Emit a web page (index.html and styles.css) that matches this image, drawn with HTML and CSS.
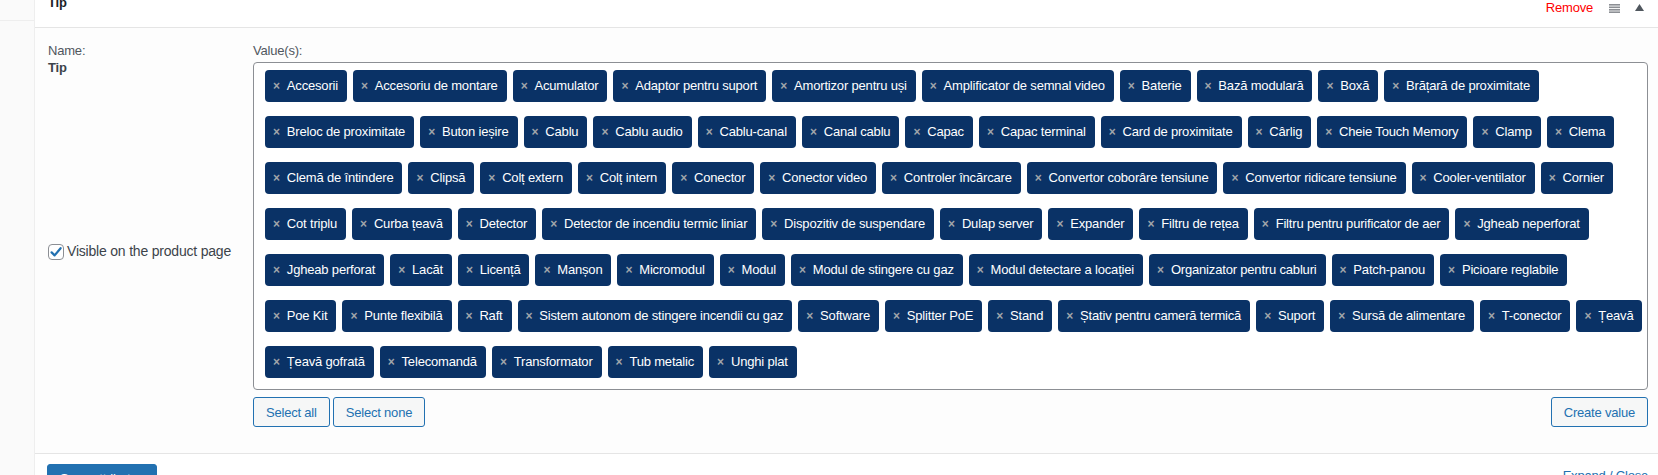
FILE: index.html
```html
<!DOCTYPE html>
<html lang="ro">
<head>
    <meta charset="UTF-8">
    <meta name="viewport" content="width=device-width, initial-scale=1.0">
    <title>Atribute produs</title>
    <link rel="stylesheet" href="styles.css">
</head>
<body>
    <div class="product-data">
        <ul class="tabs">
            <li></li>
        </ul>

        <div class="panel">
            <div class="attribute-head">
                <strong class="attribute-name">Tip</strong>
                <div class="head-actions">
                    <a href="#" class="remove-row">Remove</a>
                    <span class="handle" title="Drag">
                        <svg width="11" height="9" viewBox="0 0 11 9">
                            <rect x="0" y="0" width="11" height="1.6" fill="#8c8f94"/>
                            <rect x="0" y="2.5" width="11" height="1.6" fill="#8c8f94"/>
                            <rect x="0" y="5" width="11" height="1.6" fill="#8c8f94"/>
                            <rect x="0" y="7.4" width="11" height="1.6" fill="#8c8f94"/>
                        </svg>
                    </span>
                    <span class="toggle" title="Toggle">
                        <svg width="9" height="7" viewBox="0 0 9 7">
                            <polygon points="4.5,0 9,7 0,7" fill="#50575e"/>
                        </svg>
                    </span>
                </div>
            </div>

            <div class="attribute-body">
                <div class="attribute-left">
                    <div class="attribute-label">
                        <span class="label">Name:</span>
                        <strong>Tip</strong>
                    </div>
                    <div class="visible-row">
                        <label class="checkbox-label">
                            <span class="checkbox">
                                <svg width="14" height="14" viewBox="0 0 14 14">
                                    <path d="M2.6 7.4 L5.6 10.4 L11.6 3.2" fill="none" stroke="#2271b1" stroke-width="2.2" stroke-linecap="round" stroke-linejoin="round"/>
                                </svg>
                            </span>
                            Visible on the product page
                        </label>
                    </div>
                </div>

                <div class="attribute-values">
                    <span class="label">Value(s):</span>
                    <div class="select-box">
                        <div class="tag-row">
                            <span class="tag"><i>×</i>Accesorii</span>
                            <span class="tag"><i>×</i>Accesoriu de montare</span>
                            <span class="tag"><i>×</i>Acumulator</span>
                            <span class="tag"><i>×</i>Adaptor pentru suport</span>
                            <span class="tag"><i>×</i>Amortizor pentru uși</span>
                            <span class="tag"><i>×</i>Amplificator de semnal video</span>
                            <span class="tag"><i>×</i>Baterie</span>
                            <span class="tag"><i>×</i>Bază modulară</span>
                            <span class="tag"><i>×</i>Boxă</span>
                            <span class="tag"><i>×</i>Brățară de proximitate</span>
                        </div>
                        <div class="tag-row">
                            <span class="tag"><i>×</i>Breloc de proximitate</span>
                            <span class="tag"><i>×</i>Buton ieșire</span>
                            <span class="tag"><i>×</i>Cablu</span>
                            <span class="tag"><i>×</i>Cablu audio</span>
                            <span class="tag"><i>×</i>Cablu-canal</span>
                            <span class="tag"><i>×</i>Canal cablu</span>
                            <span class="tag"><i>×</i>Capac</span>
                            <span class="tag"><i>×</i>Capac terminal</span>
                            <span class="tag"><i>×</i>Card de proximitate</span>
                            <span class="tag"><i>×</i>Cârlig</span>
                            <span class="tag"><i>×</i>Cheie Touch Memory</span>
                            <span class="tag"><i>×</i>Clamp</span>
                            <span class="tag"><i>×</i>Clema</span>
                        </div>
                        <div class="tag-row">
                            <span class="tag"><i>×</i>Clemă de întindere</span>
                            <span class="tag"><i>×</i>Clipsă</span>
                            <span class="tag"><i>×</i>Colț extern</span>
                            <span class="tag"><i>×</i>Colț intern</span>
                            <span class="tag"><i>×</i>Conector</span>
                            <span class="tag"><i>×</i>Conector video</span>
                            <span class="tag"><i>×</i>Controler încărcare</span>
                            <span class="tag"><i>×</i>Convertor coborâre tensiune</span>
                            <span class="tag"><i>×</i>Convertor ridicare tensiune</span>
                            <span class="tag"><i>×</i>Cooler-ventilator</span>
                            <span class="tag"><i>×</i>Cornier</span>
                        </div>
                        <div class="tag-row">
                            <span class="tag"><i>×</i>Cot triplu</span>
                            <span class="tag"><i>×</i>Curba țeavă</span>
                            <span class="tag"><i>×</i>Detector</span>
                            <span class="tag"><i>×</i>Detector de incendiu termic liniar</span>
                            <span class="tag"><i>×</i>Dispozitiv de suspendare</span>
                            <span class="tag"><i>×</i>Dulap server</span>
                            <span class="tag"><i>×</i>Expander</span>
                            <span class="tag"><i>×</i>Filtru de rețea</span>
                            <span class="tag"><i>×</i>Filtru pentru purificator de aer</span>
                            <span class="tag"><i>×</i>Jgheab neperforat</span>
                        </div>
                        <div class="tag-row">
                            <span class="tag"><i>×</i>Jgheab perforat</span>
                            <span class="tag"><i>×</i>Lacăt</span>
                            <span class="tag"><i>×</i>Licență</span>
                            <span class="tag"><i>×</i>Manșon</span>
                            <span class="tag"><i>×</i>Micromodul</span>
                            <span class="tag"><i>×</i>Modul</span>
                            <span class="tag"><i>×</i>Modul de stingere cu gaz</span>
                            <span class="tag"><i>×</i>Modul detectare a locației</span>
                            <span class="tag"><i>×</i>Organizator pentru cabluri</span>
                            <span class="tag"><i>×</i>Patch-panou</span>
                            <span class="tag"><i>×</i>Picioare reglabile</span>
                        </div>
                        <div class="tag-row">
                            <span class="tag"><i>×</i>Poe Kit</span>
                            <span class="tag"><i>×</i>Punte flexibilă</span>
                            <span class="tag"><i>×</i>Raft</span>
                            <span class="tag"><i>×</i>Sistem autonom de stingere incendii cu gaz</span>
                            <span class="tag"><i>×</i>Software</span>
                            <span class="tag"><i>×</i>Splitter PoE</span>
                            <span class="tag"><i>×</i>Stand</span>
                            <span class="tag"><i>×</i>Ștativ pentru cameră termică</span>
                            <span class="tag"><i>×</i>Suport</span>
                            <span class="tag"><i>×</i>Sursă de alimentare</span>
                            <span class="tag"><i>×</i>T-conector</span>
                            <span class="tag"><i>×</i>Țeavă</span>
                        </div>
                        <div class="tag-row">
                            <span class="tag"><i>×</i>Țeavă gofrată</span>
                            <span class="tag"><i>×</i>Telecomandă</span>
                            <span class="tag"><i>×</i>Transformator</span>
                            <span class="tag"><i>×</i>Tub metalic</span>
                            <span class="tag"><i>×</i>Unghi plat</span>
                        </div>
                    </div>
                    <div class="value-actions">
                        <div class="select-buttons">
                            <button type="button" class="button">Select all</button>
                            <button type="button" class="button">Select none</button>
                        </div>
                        <button type="button" class="button">Create value</button>
                    </div>
                </div>
            </div>

            <div class="toolbar">
                <button type="button" class="button button-primary">Save attributes</button>
                <a href="#" class="expand-close">Expand / Close</a>
            </div>
        </div>
    </div>
</body>
</html>
```

FILE: styles.css
```css
body {
    margin: 0;
    font-family: "Liberation Sans", Arial, sans-serif;
    font-size: 13px;
    letter-spacing: -0.2px;
    color: #3c434a;
    background-color: #fff;
    overflow: hidden;
}

.product-data {
    display: flex;
    min-height: 475px;
}

.tabs {
    flex-shrink: 0;
    width: 34px;
    margin: 0;
    padding: 0;
    list-style: none;
    background-color: #fafafa;
    border-right: 1px solid #eee;
}

.tabs li {
    height: 20px;
    border-bottom: 1px solid #eee;
}

.panel {
    flex: 1;
    min-width: 0;
    display: flex;
    flex-direction: column;
}

.panel > * {
    flex-shrink: 0;
}

/* header of the attribute */
.attribute-head {
    height: 27px;
    display: flex;
    justify-content: space-between;
    align-items: flex-start;
    padding: 0 14px 0 13px;
    background-color: #fff;
    border-bottom: 1px solid #e5e5e5;
}

.attribute-name {
    line-height: 16px;
    margin-top: -5px;
    color: #1d2327;
}

.head-actions {
    display: flex;
    align-items: flex-start;
    line-height: 16px;
}

.remove-row {
    color: #f00;
    text-decoration: none;
}

.handle {
    display: flex;
    margin: 4px 0 0 16px;
}

.toggle {
    display: flex;
    margin: 4px 0 0 15px;
}

/* attribute body */
.attribute-body {
    display: grid;
    grid-template-columns: 205px minmax(0, 1fr);
    padding: 14px 10px 26px 13px;
    background-color: #fdfdfd;
    border-bottom: 1px solid #e5e5e5;
    line-height: 17px;
}

.attribute-left {
    display: flex;
    flex-direction: column;
}

.attribute-label {
    display: flex;
    flex-direction: column;
}

.label {
    color: #50575e;
}

.attribute-label strong {
    color: #3c434a;
}

.visible-row {
    flex: 1;
    display: flex;
    align-items: center;
}

.checkbox-label {
    display: flex;
    align-items: center;
    gap: 3px;
    font-size: 14px;
    color: #3c434a;
}

.checkbox {
    width: 14px;
    height: 14px;
    border: 1px solid #8c8f94;
    border-radius: 4px;
    background-color: #fff;
    display: flex;
}

.attribute-values {
    display: flex;
    flex-direction: column;
    min-width: 0;
}

.select-box {
    margin-top: 3px;
    padding: 7px 6px 11px 11px;
    border: 1px solid #8c8f94;
    border-radius: 4px;
    background-color: #fff;
    display: flex;
    flex-direction: column;
    gap: 14px;
}

.tag-row {
    display: flex;
    gap: 6px;
}

.tag {
    height: 32px;
    line-height: 32px;
    padding: 0 9px 0 8px;
    border-radius: 4px;
    background-color: #0a3266;
    color: #fff;
    letter-spacing: -0.18px;
    white-space: nowrap;
}

.tag i {
    font-style: normal;
    font-weight: bold;
    font-size: 12px;
    color: #a0a5aa;
    margin-right: 7px;
}

.value-actions {
    display: flex;
    justify-content: space-between;
    margin-top: 7px;
}

.select-buttons {
    display: flex;
    gap: 3px;
}

.button {
    height: 30px;
    padding: 0 12px;
    font-family: inherit;
    font-size: 13px;
    letter-spacing: -0.2px;
    color: #2271b1;
    background-color: #f6f7f7;
    border: 1px solid #2271b1;
    border-radius: 3px;
    cursor: pointer;
}

.toolbar {
    display: flex;
    justify-content: space-between;
    align-items: flex-start;
    padding: 10px 10px 0 12px;
    background-color: #fff;
}

.button-primary {
    height: 28px;
    padding: 0 12px;
    color: #fff;
    background-color: #2271b1;
}

.expand-close {
    margin-top: 3px;
    line-height: 17px;
    color: #2271b1;
    text-decoration: none;
}
```
